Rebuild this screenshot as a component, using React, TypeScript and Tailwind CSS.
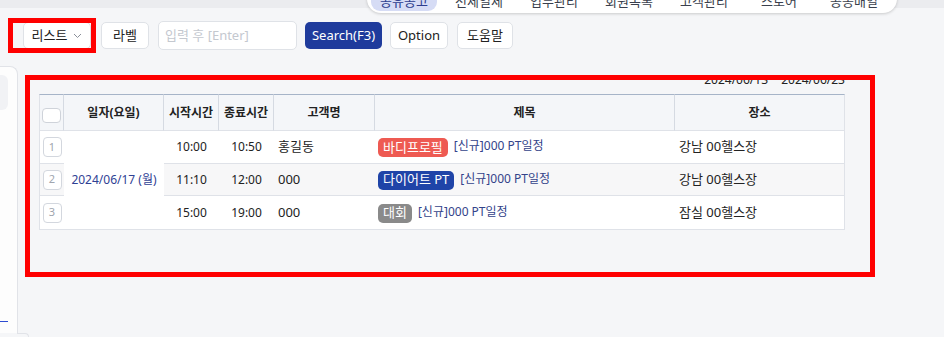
const tabs = ["공유공고", "전체일체", "업무관리", "회원목록", "고객관리", "스토어", "공동배열"];

type Row = {
  no: number;
  start: string;
  end: string;
  name: string;
  badge: string;
  badgeClass: string;
  place: string;
};

const rows: Row[] = [
  { no: 1, start: "10:00", end: "10:50", name: "홍길동", badge: "바디프로필", badgeClass: "bg-[#ee5a52]", place: "강남 00헬스장" },
  { no: 2, start: "11:10", end: "12:00", name: "000", badge: "다이어트 PT", badgeClass: "bg-[#1f44a8]", place: "강남 00헬스장" },
  { no: 3, start: "15:00", end: "19:00", name: "000", badge: "대회", badgeClass: "bg-[#8a8a8a]", place: "잠실 00헬스장" },
];

const heads = ["일자(요일)", "시작시간", "종료시간", "고객명", "제목", "장소"];

const rowHeights = ["h-[33px]", "h-[32px]", "h-[34px]"];

function Btn({ children, className = "" }: { children: React.ReactNode; className?: string }) {
  return (
    <div
      className={`flex h-[27px] items-center justify-center rounded-[5px] border border-[#dfe2e7] bg-white text-[13px] text-[#222] ${className}`}
    >
      {children}
    </div>
  );
}

export default function App() {
  return (
    <div
      className="relative h-[337px] w-[944px] overflow-hidden bg-[#f5f6f8]"
      style={{ fontFamily: '"Noto Sans", "Noto Sans CJK KR", sans-serif' }}
    >
      {/* top strip + floating nav */}
      <div className="h-[8px] bg-[#ebecef]" />
      <div className="ml-[367px] -mt-[28px] flex h-[33px] w-[530px] items-start gap-[9px] overflow-hidden rounded-b-[14px] bg-white pl-[4px] shadow-[0_1px_3px_rgba(0,0,0,0.18)]">
        {tabs.map((t, i) => (
          <div
            key={t}
            className={[
              "mt-[2px] h-[29px] w-[66px] shrink-0 rounded-[9px] pt-[9px] text-center text-[13px] leading-[20px]",
              i === 0 ? "bg-[#d6dcf5] text-[#2d3d8f]" : "text-[#3a3f4d]",
            ].join(" ")}
          >
            {t}
          </div>
        ))}
      </div>

      {/* toolbar */}
      <div className="mt-[8px] flex items-center pl-[23px]">
        <Btn className="w-[68px] gap-[6px]">
          <span>리스트</span>
          <svg width="9" height="6" viewBox="0 0 9 6" fill="none" stroke="#8a8f99" strokeWidth="1">
            <path d="M1 1l3.5 3.5L8 1" />
          </svg>
        </Btn>
        <Btn className="ml-[10px] w-[48px]">라벨</Btn>
        <div className="ml-[9px] flex h-[29px] w-[139px] items-center rounded-[5px] border border-[#dfe2e7] bg-white pl-[6px] text-[13px] text-[#c4c8cf]">
          입력 후 [Enter]
        </div>
        <div className="ml-[8px] flex h-[27px] w-[77px] items-center justify-center rounded-[5px] bg-[#1f3b9c] text-[13px] text-white">
          Search(F3)
        </div>
        <Btn className="ml-[8px] w-[58px]">Option</Btn>
        <Btn className="ml-[9px] w-[56px]">도움말</Btn>
      </div>

      {/* body */}
      <div className="mt-[16px] flex">
        <div className="h-[267px] w-[18px] shrink-0 rounded-tr-[8px] border-r border-t border-[#e1e3e8] bg-[#fdfdfd] pt-[8px]">
          <div className="h-[35px] w-[8px] rounded-r-[6px] bg-[#f1f2f5]" />
          <div className="mt-[211px] h-[1px] w-[8px] bg-[#2d4bd1]" />
        </div>

        <div className="pl-[21px] pt-[6px]">
          <div className="w-[806px] text-right text-[12px] leading-[16px] text-[#222]">
            2024/06/13 ~ 2024/06/23
          </div>
          <table className="mt-[6px] w-[806px] table-fixed border-separate border-spacing-0 text-[12px] text-[#222]">
            <colgroup>
              <col className="w-[25px]" />
              <col className="w-[100px]" />
              <col className="w-[55px]" />
              <col className="w-[55px]" />
              <col className="w-[101px]" />
              <col className="w-[300px]" />
              <col className="w-[170px]" />
            </colgroup>
            <thead>
              <tr className="h-[37px]">
                <th className="border-b border-l border-r border-t border-b-[#dfe2e8] border-l-[#dfe2e8] border-r-[#d5dae2] border-t-[#a6b4c8] bg-[#f4f6f9] p-0">
                  <div className="mx-auto mt-[5px] h-[15px] w-[19px] rounded-[4px] border border-[#cfd3da] bg-white" />
                </th>
                {heads.map((h, i) => (
                  <th
                    key={h}
                    className={[
                      "border-b border-t border-b-[#dfe2e8] border-t-[#a6b4c8] bg-[#f4f6f9] p-0 text-center font-bold",
                      i < heads.length - 1 ? "border-r border-r-[#d5dae2]" : "border-r border-r-[#dfe2e8]",
                    ].join(" ")}
                  >
                    {h}
                  </th>
                ))}
              </tr>
            </thead>
            <tbody>
              {rows.map((r, i) => {
                const bg = i === 1 ? "bg-[#f7f7f8]" : "bg-white";
                return (
                  <tr key={r.no} className={rowHeights[i]}>
                    <td className={`border-b border-l border-[#dfe2e8] p-0 ${bg}`}>
                      <div className="mx-auto flex h-[20px] w-[19px] items-center justify-center rounded-[4px] border border-[#d3d7de] bg-white text-[11px] text-[#a0a5ae]">
                        {r.no}
                      </div>
                    </td>
                    {i === 0 && (
                      <td rowSpan={3} className="border-b border-[#dfe2e8] bg-white p-0 text-center text-[#2f4194]">
                        2024/06/17 (월)
                      </td>
                    )}
                    <td className={`border-b border-[#dfe2e8] p-0 text-center ${bg}`}>{r.start}</td>
                    <td className={`border-b border-[#dfe2e8] p-0 text-center ${bg}`}>{r.end}</td>
                    <td className={`border-b border-[#dfe2e8] p-0 pl-[4px] text-[13px] ${bg}`}>{r.name}</td>
                    <td className={`border-b border-[#dfe2e8] p-0 pl-[3px] ${bg}`}>
                      <div className="flex items-center gap-[6px]">
                        <span className={`mt-[1px] flex h-[19px] items-center rounded-[5px] px-[5px] text-[13px] text-white ${r.badgeClass}`}>
                          {r.badge}
                        </span>
                        <span className="-mt-[2px] text-[#33438a]">[신규]000 PT일정</span>
                      </div>
                    </td>
                    <td className={`border-b border-r border-[#dfe2e8] p-0 pl-[4px] text-[13px] ${bg}`}>{r.place}</td>
                  </tr>
                );
              })}
            </tbody>
          </table>
        </div>
      </div>

      {/* bottom-left corner piece */}
      <div className="absolute left-[17px] top-[333px] h-[8px] w-[12px] rounded-tr-[4px] border-r border-t border-[#e1e3e8]" />

      {/* red annotation boxes */}
      <div className="absolute left-[8px] top-[18px] h-[35px] w-[88px] border-[5px] border-[#ff0000]" />
      <div className="absolute left-[25px] top-[75px] h-[202px] w-[850px] border-[5px] border-[#ff0000]" />
    </div>
  );
}
